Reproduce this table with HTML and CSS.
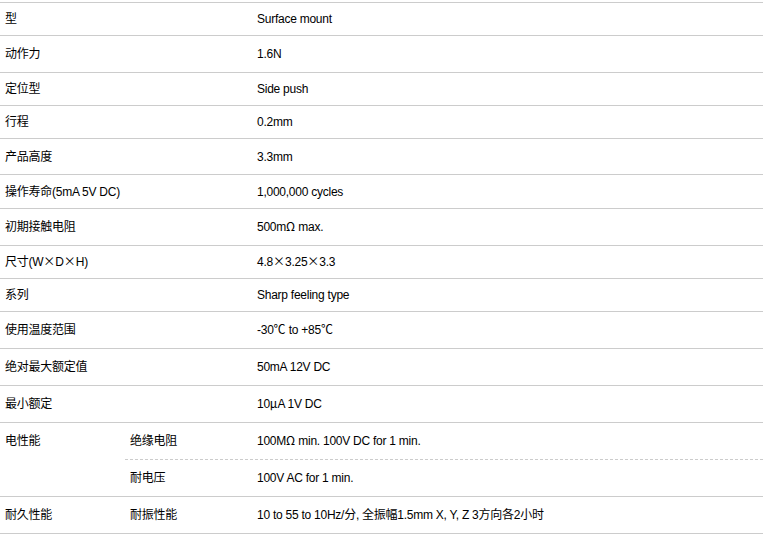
FILE: index.html
```html
<!DOCTYPE html>
<html lang="zh">
<head>
<meta charset="utf-8">
<title>规格</title>
<link rel="stylesheet" href="styles.css">
</head>
<body>
<div class="specs">
  <div class="row h33"><div class="label">型</div><div class="value">Surface mount</div></div>
  <div class="row h37"><div class="label">动作力</div><div class="value">1.6N</div></div>
  <div class="row h33"><div class="label">定位型</div><div class="value">Side push</div></div>
  <div class="row h33"><div class="label">行程</div><div class="value">0.2mm</div></div>
  <div class="row h36"><div class="label">产品高度</div><div class="value">3.3mm</div></div>
  <div class="row h34"><div class="label">操作寿命(5mA 5V DC)</div><div class="value">1,000,000 cycles</div></div>
  <div class="row h37"><div class="label">初期接触电阻</div><div class="value">500m<span class="sym">Ω</span> max.</div></div>
  <div class="row h33"><div class="label">尺寸(W<span class="sym">×</span>D<span class="sym">×</span>H)</div><div class="value">4.8<span class="sym">×</span>3.25<span class="sym">×</span>3.3</div></div>
  <div class="row h33"><div class="label">系列</div><div class="value">Sharp feeling type</div></div>
  <div class="row h37"><div class="label">使用温度范围</div><div class="value">-30<span class="sym">℃</span> to +85<span class="sym">℃</span></div></div>
  <div class="row h37"><div class="label">绝对最大额定值</div><div class="value">50mA 12V DC</div></div>
  <div class="row h37"><div class="label">最小额定</div><div class="value">10<span class="sym">μ</span>A 1V DC</div></div>
  <div class="group">
    <div class="label glabel">电性能</div>
    <div class="subs">
      <div class="sub s36"><div class="sublabel">绝缘电阻</div><div class="value">100M<span class="sym">Ω</span> min. 100V DC for 1 min.</div></div>
      <div class="sub s37 dashed"><div class="sublabel">耐电压</div><div class="value">100V AC for 1 min.</div></div>
    </div>
  </div>
  <div class="group last">
    <div class="label glabel">耐久性能</div>
    <div class="subs">
      <div class="sub s36"><div class="sublabel">耐振性能</div><div class="value">10 to 55 to 10Hz/分, 全振幅1.5mm X, Y, Z 3方向各2小时</div></div>
    </div>
  </div>
</div>
</body>
</html>
```

FILE: styles.css
```css
* { box-sizing: border-box; }

body {
  margin: 0;
  padding-top: 2px;
  background: #fff;
  color: #000;
  font-family: "Liberation Sans", "Noto Sans CJK SC", sans-serif;
  font-size: 12px;
  line-height: 14px;
  letter-spacing: -0.25px;
}

.sym {
  font-family: "Noto Sans CJK SC", sans-serif;
  letter-spacing: 0;
  line-height: 0;
}

.specs {
  width: 763px;
}

.row {
  display: grid;
  grid-template-columns: 252px 1fr;
  align-items: center;
  border-top: 1px solid #cccccc;
}

.h33 { height: 33px; }
.h34 { height: 34px; }
.h36 { height: 36px; }
.h37 { height: 37px; }

.label {
  padding-left: 5px;
}

.value {
  padding-left: 5px;
  white-space: nowrap;
}

.group {
  display: grid;
  grid-template-columns: 125px 1fr;
  border-top: 1px solid #cccccc;
}

.group.last {
  border-bottom: 1px solid #cccccc;
}

.glabel {
  height: 36px;
  display: flex;
  align-items: center;
}

.subs {
  display: flex;
  flex-direction: column;
}

.sub {
  display: grid;
  grid-template-columns: 127px 1fr;
  align-items: center;
}

.s36 { height: 36px; }
.s37 { height: 37px; }

.sub.dashed {
  border-top: 1px dashed #cccccc;
}

.sublabel {
  padding-left: 5px;
}
```
